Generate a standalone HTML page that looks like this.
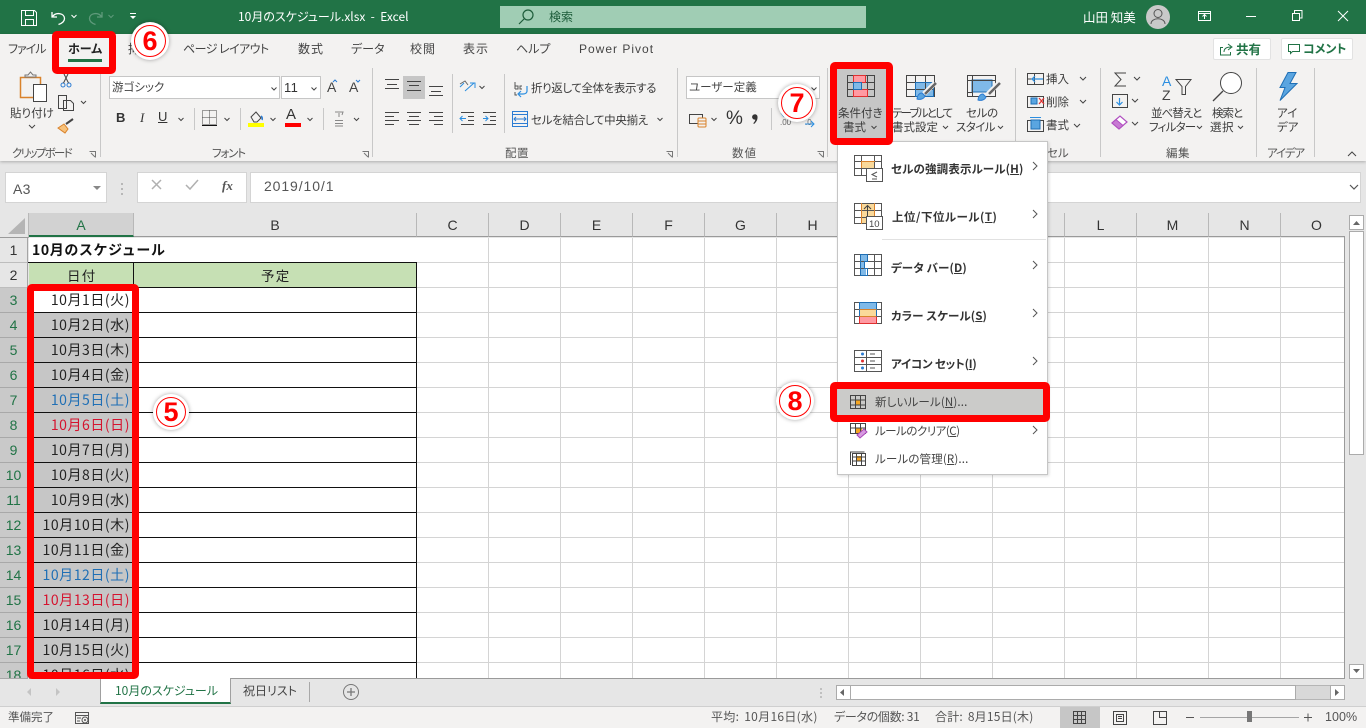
<!DOCTYPE html>
<html lang="ja"><head><meta charset="utf-8"><title>10月のスケジュール.xlsx - Excel</title>
<style>
html,body{margin:0;padding:0;width:1366px;height:728px;overflow:hidden;background:#e6e6e6}
body{position:relative;font-family:"Liberation Sans","Noto Sans CJK JP",sans-serif;font-size:12px;color:#444}
div,span.t{position:absolute;box-sizing:border-box}
.t{position:absolute;white-space:nowrap;line-height:16px;font-size:12px;color:#444;font-family:"Noto Sans CJK JP","Liberation Sans",sans-serif;font-feature-settings:"palt" 1}
.tab{top:41px;font-size:12px}
.lab{top:145px;font-size:11.5px;color:#555}
.rb{font-size:11.5px;color:#3c3c3c}
.sep{width:1px;background:#c8c8c8}
.col{top:213px;height:24px;background:#e6e6e6;border-right:1px solid #b8b8b8;border-bottom:1px solid #9a9a9a;text-align:center;font:14px/24px "Liberation Sans",sans-serif;color:#333}
.row{left:0;width:28px;height:25px;background:#e6e6e6;border-bottom:1px solid #bdbdbd;border-right:1px solid #a5a5a5;text-align:center;font:14px/24px "Liberation Sans",sans-serif;color:#333}
.row.s{background:#c9c9c9;color:#217346;border-bottom:1px solid #a8a8a8}
.d{left:29px;width:104px;height:24px;background:#c6c6c6;text-align:right;padding-right:3px;font:14px/24px "Noto Sans CJK JP",sans-serif;letter-spacing:.55px;color:#222;white-space:nowrap}
.sat{color:#1f6fb5}.sun{color:#d5142f}
.rf{border:7px solid #f00;border-radius:5px}
.num{border-radius:50%;background:#fff;box-shadow:0 0 4px rgba(0,0,0,.35);}
.num span{position:absolute;left:3px;top:3px;right:3px;bottom:3px;border:1.5px solid #f00;border-radius:50%;text-align:center;font:bold 27px/30px "Liberation Sans",sans-serif;color:#f00}
.m{font-size:11.5px;font-weight:700;color:#333;letter-spacing:.15px}
.m2{font-size:11.5px;color:#444;letter-spacing:.15px}
</style></head><body>

<!-- title bar -->
<div style="left:0;top:0;width:1366px;height:34px;background:#217346"></div>
<div style="left:500px;top:6px;width:366px;height:22px;background:#a0cdb4"></div>
<span class="t" style="left:238px;top:9px;color:#fff;font-size:12px;">10月のスケジュール.xlsx &nbsp;-&nbsp; Excel</span>
<span class="t" style="left:549px;top:9px;color:#1d5c3a">検索</span>
<span class="t" style="left:1083px;top:9px;color:#fff;font-size:12.5px">山田 知美</span>

<!-- ribbon -->
<div style="left:0;top:34px;width:1366px;height:127px;background:#f3f2f1;box-shadow:0 1px 3px rgba(0,0,0,.25)"></div>
<span class="t tab" style="left:8px;letter-spacing:-1px">ファイル</span>
<span class="t tab" style="left:68px;font-weight:700;color:#222;">ホーム</span>
<div style="left:68px;top:59px;width:34px;height:3px;background:#217346"></div>
<span class="t tab" style="left:128px">挿入</span>
<span class="t tab" style="left:183px;letter-spacing:-.55px">ページ レイアウト</span>
<span class="t tab" style="left:298px;letter-spacing:1px">数式</span>
<span class="t tab" style="left:351px">データ</span>
<span class="t tab" style="left:410px;letter-spacing:1px">校閲</span>
<span class="t tab" style="left:463px;letter-spacing:1px">表示</span>
<span class="t tab" style="left:516px">ヘルプ</span>
<span class="t tab" style="left:579px;font-family:'Liberation Sans',sans-serif;letter-spacing:1px">Power Pivot</span>

<div style="left:1213px;top:38px;width:58px;height:22px;background:#fff;border:1px solid #e2e2e2;border-radius:2px"></div>
<div style="left:1281px;top:38px;width:72px;height:22px;background:#fff;border:1px solid #e2e2e2;border-radius:2px"></div>
<span class="t" style="left:1236px;top:41px;color:#217346;font-weight:700;font-size:12.5px">共有</span>
<span class="t" style="left:1303px;top:41px;color:#217346;font-weight:700;font-size:12px">コメント</span>

<!-- separators -->
<div class="sep" style="left:100px;top:68px;height:89px"></div>
<div class="sep" style="left:372px;top:68px;height:89px"></div>
<div class="sep" style="left:677px;top:68px;height:89px"></div>
<div class="sep" style="left:827px;top:68px;height:89px"></div>
<div class="sep" style="left:1015px;top:68px;height:89px"></div>
<div class="sep" style="left:1100px;top:68px;height:89px"></div>
<div class="sep" style="left:1256px;top:68px;height:89px"></div>
<div class="sep" style="left:1314px;top:68px;height:89px"></div>
<div class="sep" style="left:194px;top:108px;height:22px"></div>
<div class="sep" style="left:240px;top:108px;height:22px"></div>
<div class="sep" style="left:323px;top:108px;height:22px"></div>
<div class="sep" style="left:504px;top:74px;height:59px"></div>
<div class="sep" style="left:771px;top:108px;height:22px"></div>
<div class="sep" style="left:452px;top:74px;height:59px"></div>

<!-- group labels -->
<span class="t lab" style="left:12px;letter-spacing:-1.7px">クリップボード</span>
<span class="t lab" style="left:212px;letter-spacing:-1.2px">フォント</span>
<span class="t lab" style="left:505px;letter-spacing:.5px">配置</span>
<span class="t lab" style="left:732px;letter-spacing:1px">数値</span>
<span class="t lab" style="left:1047px">セル</span>
<span class="t lab" style="left:1166px;letter-spacing:.5px">編集</span>
<span class="t lab" style="left:1267px;letter-spacing:-1.2px">アイデア</span>

<!-- clipboard text -->
<span class="t rb" style="left:10px;top:105px">貼り付け</span>

<!-- font boxes -->
<div style="left:109px;top:76px;width:171px;height:23px;background:#fff;border:1px solid #c6c6c6"></div>
<div style="left:281px;top:76px;width:40px;height:23px;background:#fff;border:1px solid #c6c6c6"></div>
<span class="t" style="left:112px;top:79px;font-size:11.5px">游ゴシック</span>
<span class="t" style="left:284px;top:80px;font:13px/16px 'Liberation Sans',sans-serif;color:#333;letter-spacing:.3px">11</span>
<span class="t" style="left:327px;top:79px;font:14px/16px 'Liberation Sans',sans-serif">A</span>
<span class="t" style="left:349px;top:79px;font:14px/16px 'Liberation Sans',sans-serif">A</span>
<span class="t" style="left:116px;top:110px;font:bold 13px/16px 'Liberation Sans',sans-serif;color:#333">B</span>
<span class="t" style="left:140px;top:110px;font:italic 13px/16px 'Liberation Serif',serif;color:#333">I</span>
<span class="t" style="left:158px;top:109px;font:13px/16px 'Liberation Sans',sans-serif;color:#333;text-decoration:underline">U</span>
<span class="t" style="left:286px;top:107px;font:15px/16px 'Liberation Sans',sans-serif;color:#333">A</span>

<!-- align -->
<div style="left:403px;top:76px;width:22px;height:23px;background:#c6c6c6"></div>
<span class="t rb" style="left:531px;top:80px;letter-spacing:-.4px">折り返して全体を表示する</span>
<span class="t rb" style="left:531px;top:112px;letter-spacing:-.3px">セルを結合して中央揃え</span>

<!-- number -->
<div style="left:686px;top:76px;width:134px;height:23px;background:#fff;border:1px solid #c6c6c6"></div>
<span class="t" style="left:689px;top:79px;font-size:11.5px">ユーザー定義</span>
<span class="t" style="left:726px;top:109px;font:19px/20px 'Liberation Sans',sans-serif;color:#333">%</span>
<span class="t" style="left:780px;top:118px;font:8px/9px 'Liberation Sans',sans-serif;color:#666">.00</span>
<span class="t" style="left:805px;top:118px;font:8px/9px 'Liberation Sans',sans-serif;color:#666">.0</span>

<!-- conditional -->
<div style="left:837px;top:69px;width:49px;height:70px;background:#c6c6c6"></div>
<span class="t rb" style="left:838px;top:105px">条件付き</span>
<span class="t rb" style="left:843px;top:119px">書式</span>
<span class="t rb" style="left:892px;top:105px;letter-spacing:-1.8px">テーブルとして</span>
<span class="t rb" style="left:892px;top:119px">書式設定</span>
<span class="t rb" style="left:966px;top:105px;letter-spacing:-.3px">セルの</span>
<span class="t rb" style="left:956px;top:119px;letter-spacing:-.6px">スタイル</span>
<span class="t rb" style="left:1046px;top:71px">挿入</span>
<span class="t rb" style="left:1046px;top:94px">削除</span>
<span class="t rb" style="left:1046px;top:117px">書式</span>
<span class="t rb" style="left:1151px;top:105px;letter-spacing:-1px">並べ替えと</span>
<span class="t rb" style="left:1149px;top:119px;letter-spacing:-.8px">フィルター</span>
<span class="t rb" style="left:1212px;top:105px;letter-spacing:-1px">検索と</span>
<span class="t rb" style="left:1210px;top:119px;letter-spacing:.5px">選択</span>
<span class="t rb" style="left:1277px;top:105px">アイ</span>
<span class="t rb" style="left:1277px;top:119px">デア</span>

<!-- formula bar -->
<div style="left:5px;top:172px;width:102px;height:31px;background:#fff;border:1px solid #d4d4d4"></div>
<div style="left:137px;top:172px;width:110px;height:31px;background:#fff;border:1px solid #d4d4d4"></div>
<div style="left:250px;top:172px;width:1111px;height:31px;background:#fff;border:1px solid #d4d4d4"></div>
<span class="t" style="left:13px;top:181px;font:14px/16px 'Liberation Sans',sans-serif;color:#555;letter-spacing:.3px">A3</span>
<span class="t" style="left:264px;top:178px;font:14px/16px 'Liberation Sans',sans-serif;color:#555;letter-spacing:.9px">2019/10/1</span>
<span class="t" style="left:222px;top:178px;font:italic bold 13px/16px 'Liberation Serif',serif;color:#555">fx</span>

<!-- grid -->
<div style="left:29px;top:238px;width:1316px;height:441px;background-color:#fff"></div>
<div style="left:417px;top:238px;width:928px;height:440px;background-image:repeating-linear-gradient(to right,transparent 0 71px,#d4d4d4 71px 72px)"></div>
<div style="left:29px;top:238px;width:1316px;height:440px;background-image:repeating-linear-gradient(to bottom,transparent 0 24px,#d4d4d4 24px 25px)"></div>
<div style="left:1344px;top:237px;width:1px;height:442px;background:#9a9a9a"></div>
<div style="left:29px;top:678px;width:1316px;height:1px;background:#9a9a9a"></div>
<div style="left:29px;top:263px;width:388px;height:24px;background:#c6e0b4"></div>
<div style="left:28px;top:262px;width:389px;height:416px;background-image:repeating-linear-gradient(to bottom,#111 0 1px,transparent 1px 25px)"></div>
<div style="left:133px;top:262px;width:1px;height:26px;background:#111"></div>
<div style="left:416px;top:262px;width:1px;height:416px;background:#111"></div>

<!-- column headers -->
<div style="left:0;top:213px;width:29px;height:25px;background:#e6e6e6;border-right:1px solid #b8b8b8;border-bottom:1px solid #9a9a9a"></div>
<div class="col" style="left:29px;width:105px;background:#d2d2d2;color:#217346;border-bottom:2px solid #217346">A</div>
<div class="col" style="left:134px;width:283px">B</div>
<div class="col" style="left:417px;width:72px">C</div>
<div class="col" style="left:489px;width:72px">D</div>
<div class="col" style="left:561px;width:72px">E</div>
<div class="col" style="left:633px;width:72px">F</div>
<div class="col" style="left:705px;width:72px">G</div>
<div class="col" style="left:777px;width:72px">H</div>
<div class="col" style="left:849px;width:72px">I</div>
<div class="col" style="left:921px;width:72px">J</div>
<div class="col" style="left:993px;width:72px">K</div>
<div class="col" style="left:1065px;width:72px">L</div>
<div class="col" style="left:1137px;width:72px">M</div>
<div class="col" style="left:1209px;width:72px">N</div>
<div class="col" style="left:1281px;width:72px">O</div>

<!-- row headers -->
<div class="row" style="top:238px">1</div>
<div class="row" style="top:263px">2</div>
<div class="row s" style="top:288px">3</div>
<div class="row s" style="top:313px">4</div>
<div class="row s" style="top:338px">5</div>
<div class="row s" style="top:363px">6</div>
<div class="row s" style="top:388px">7</div>
<div class="row s" style="top:413px">8</div>
<div class="row s" style="top:438px">9</div>
<div class="row s" style="top:463px">10</div>
<div class="row s" style="top:488px">11</div>
<div class="row s" style="top:513px">12</div>
<div class="row s" style="top:538px">13</div>
<div class="row s" style="top:563px">14</div>
<div class="row s" style="top:588px">15</div>
<div class="row s" style="top:613px">16</div>
<div class="row s" style="top:638px">17</div>
<div class="row s" style="top:663px;height:16px;overflow:hidden">18</div>

<!-- cells -->
<span class="t" style="left:32px;top:241px;font-size:14px;font-weight:700;color:#111;letter-spacing:.6px;line-height:18px;font-feature-settings:normal">10月のスケジュール</span>
<span class="t" style="left:67px;top:266px;font-size:13.5px;color:#222;letter-spacing:1.2px;line-height:18px">日付</span>
<span class="t" style="left:261px;top:266px;font-size:13.5px;color:#222;letter-spacing:1.2px;line-height:18px">予定</span>
<div class="d" style="top:288px;background:#fff">10月1日(火)</div>
<div class="d" style="top:313px">10月2日(水)</div>
<div class="d" style="top:338px">10月3日(木)</div>
<div class="d" style="top:363px">10月4日(金)</div>
<div class="d sat" style="top:388px">10月5日(土)</div>
<div class="d sun" style="top:413px">10月6日(日)</div>
<div class="d" style="top:438px">10月7日(月)</div>
<div class="d" style="top:463px">10月8日(火)</div>
<div class="d" style="top:488px">10月9日(水)</div>
<div class="d" style="top:513px">10月10日(木)</div>
<div class="d" style="top:538px">10月11日(金)</div>
<div class="d sat" style="top:563px">10月12日(土)</div>
<div class="d sun" style="top:588px">10月13日(日)</div>
<div class="d" style="top:613px">10月14日(月)</div>
<div class="d" style="top:638px">10月15日(火)</div>
<div class="d" style="top:663px;height:15px;overflow:hidden">10月16日(水)</div>

<!-- scrollbars -->
<div style="left:1345px;top:213px;width:21px;height:466px;background:#e6e6e6"></div>
<div style="left:1349px;top:215px;width:15px;height:15px;background:#fff;border:1px solid #ababab"></div>
<div style="left:1349px;top:231px;width:15px;height:224px;background:#fff;border:1px solid #ababab"></div>
<div style="left:1349px;top:664px;width:15px;height:15px;background:#fff;border:1px solid #ababab"></div>

<!-- tab bar -->
<div style="left:0;top:679px;width:1366px;height:27px;background:#e6e6e6"></div>
<div style="left:100px;top:678px;width:131px;height:26px;background:#fff;border-left:1px solid #a0a0a0;border-right:1px solid #a0a0a0;border-bottom:2px solid #217346"></div>
<span class="t" style="left:115px;top:683px;color:#217346;font-size:12px;">10月のスケジュール</span>
<span class="t" style="left:243px;top:683px;font-size:12px;color:#444;">祝日リスト</span>
<div style="left:309px;top:682px;width:1px;height:20px;background:#a8a8a8"></div>
<div style="left:836px;top:685px;width:509px;height:15px;background:#d8d8d8;border:1px solid #b5b5b5;border-left:none;border-right:none"></div>
<div style="left:836px;top:685px;width:15px;height:15px;background:#fff;border:1px solid #ababab"></div>
<div style="left:851px;top:685px;width:445px;height:15px;background:#fff;border:1px solid #ababab;border-left:none"></div>
<div style="left:1330px;top:685px;width:15px;height:15px;background:#fff;border:1px solid #ababab"></div>

<!-- status bar -->
<div style="left:0;top:706px;width:1366px;height:22px;background:#f3f2f1;border-top:1px solid #cfcfcf"></div>
<div style="left:1060px;top:707px;width:40px;height:21px;background:#c6c6c6"></div>
<span class="t" style="left:8px;top:709px;font-size:11.5px;color:#555">準備完了</span>
<span class="t" style="left:711px;top:709px;font-size:12px;letter-spacing:.3px;word-spacing:2px;color:#555">平均: 10月16日(水)</span>
<span class="t" style="left:834px;top:709px;font-size:12px;letter-spacing:-.3px;color:#555">データの個数: 31</span>
<span class="t" style="left:935px;top:709px;font-size:12px;letter-spacing:.2px;word-spacing:2px;color:#555">合計: 8月15日(木)</span>
<span class="t" style="left:1325px;top:709px;font:12.5px/16px 'Liberation Sans',sans-serif;color:#555;letter-spacing:.05px">100%</span>
<div style="left:1200px;top:717px;width:99px;height:1px;background:#a5a5a5"></div>
<div style="left:1247px;top:711px;width:5px;height:11px;background:#777"></div>

<!-- dropdown menu -->
<div style="left:837px;top:141px;width:211px;height:334px;background:#fff;border:1px solid #c6c6c6;box-shadow:1px 1px 3px rgba(0,0,0,.15)"></div>
<div style="left:882px;top:239px;width:164px;height:1px;background:#e1e1e1"></div>
<div style="left:838px;top:388px;width:205px;height:28px;background:#cbcbc9"></div>
<span class="t m" style="left:891px;top:161px">セルの強調表示ルール(<u>H</u>)</span>
<span class="t m" style="left:892px;top:209px;letter-spacing:.5px">上位/下位ルール(<u>T</u>)</span>
<span class="t m" style="left:891px;top:260px">データ バー(<u>D</u>)</span>
<span class="t m" style="left:891px;top:308px;letter-spacing:.1px">カラー スケール(<u>S</u>)</span>
<span class="t m" style="left:891px;top:356px;letter-spacing:-.2px">アイコン セット(<u>I</u>)</span>
<span class="t m2" style="left:875px;top:394px">新しいルール(<u>N</u>)...</span>
<span class="t m2" style="left:875px;top:423px;letter-spacing:-.5px">ルールのクリア(<u>C</u>)</span>
<span class="t m2" style="left:875px;top:451px">ルールの管理(<u>R</u>)...</span>

<!-- icons -->
<svg width="1366" height="728" style="position:absolute;left:0;top:0" fill="none" stroke-width="1">
<!-- save -->
<g stroke="#fff"><path d="M21.5 10.5h13l2 2v13h-15z"/><path d="M25.500 10.500v5h8v-5M25.500 25.500v-6h8v6"/></g>
<!-- undo / redo -->
<path d="M52 12v5h5M52.500 16.500c4-5 12-3 12 2 0 3-3 5-6 6" stroke="#fff" stroke-width="1.300"/>
<path d="M71.500 15l2.500 2.500 2.500-2.500" stroke="#fff"/>
<path d="M102 12v5h-5M101.500 16.500c-4-5-12-3-12 2 0 3 3 5 6 6" stroke="#5f9a7b" stroke-width="1.300"/>
<path d="M108.500 15l2.500 2.500 2.500-2.500" stroke="#5f9a7b"/>
<path d="M130 13.500h6" stroke="#fff"/><path d="M130 16l3 3 3-3z" fill="#fff"/>
<!-- search -->
<circle cx="528" cy="15" r="5" stroke="#1d5c3a" stroke-width="1.200"/><path d="M524 19l-5 5" stroke="#1d5c3a" stroke-width="1.200"/>
<!-- avatar -->
<circle cx="1158" cy="17" r="12" fill="#c9c9c9"/><circle cx="1158" cy="13.500" r="4" stroke="#555"/><path d="M1151 24c0-7 14-7 14 0" stroke="#555"/>
<!-- window ctrls -->
<g stroke="#fff"><path d="M1198.500 11.500h12v9h-12zM1198.500 13.500h12M1204.500 19v-4M1202.500 16.500l2-2 2 2"/><path d="M1246 16.500h10"/><path d="M1292.500 13.500h7v7h-7zM1294.500 13v-2.500h7.500v7.500h-2.500"/><path d="M1338 11l10 10M1348 11l-10 10"/></g>
<!-- share / comment -->
<g stroke="#217346"><path d="M1223 47.500h-2.500v7.500h10v-3M1224 52c0-4 3-5 7-5M1228 44l4 3-4 3"/><path d="M1288.500 44.500h11v7h-7l-2 2v-2h-2z"/></g>
<!-- clipboard -->
<path d="M20.500 77.500h20v20h-20z" stroke="#d9822b" stroke-width="1.500"/><path d="M25 77h11v-2h-3l-2.500-3-2.500 3h-3z" fill="#f3f2f1" stroke="#777"/>
<path d="M33.500 84.500h13v17h-13z" fill="#fff" stroke="#444"/>
<path d="M29 125l3 3 3-3" stroke="#444"/>
<g stroke="#2b7cd3"><circle cx="63" cy="85" r="2"/><circle cx="69" cy="85" r="2"/></g><path d="M63.500 83L68 74M68.500 83L64 74" stroke="#444"/>
<path d="M58.500 95.500h8v13h-8zM63.500 100.500h7l3 3v7h-10z" fill="#f3f2f1" stroke="#444"/>
<path d="M81 101l2.500 2.500 2.500-2.500" stroke="#444"/>
<path d="M58 128l6-4 4 5-3 4z" fill="#f7c27b" stroke="#d9822b"/><path d="M66 124l7-5" stroke="#444" stroke-width="2"/>
<!-- dialog launchers -->
<g stroke="#777"><path d="M89.500 151.500h6v6M91 153l4 4M362.500 151.500h6v6M364 153l4 4M666.500 151.500h6v6M668 153l4 4M817.500 151.500h6v6M819 153l4 4"/></g>
<!-- chevrons -->
<g stroke="#444"><path d="M271.500 87.500l2.500 2.500 2.500-2.500M311.500 87.500l2.500 2.500 2.500-2.500M178.500 118l2.500 2.500 2.500-2.500M224.500 118l2.500 2.500 2.500-2.500M270.500 118l2.500 2.500 2.500-2.500M307.500 118l2.500 2.500 2.500-2.500M354 118l2.500 2.500 2.500-2.500M479.500 86l2.500 2.500 2.500-2.500M657.500 118l2.500 2.500 2.500-2.500M811.500 87.500l2.500 2.500 2.500-2.500M711.500 118l2.500 2.500 2.500-2.500M871.500 126l2.500 2.500 2.500-2.500M943 126l2.500 2.500 2.500-2.500M998 126l2.500 2.500 2.500-2.500M1080 77l3 3 3-3M1080 100l3 3 3-3M1074 124l3 3 3-3M1134 77l3 3 3-3M1132 99l3 3 3-3M1132 122l3 3 3-3M1197 126l2.500 2.500 2.500-2.500M1238 126l2.500 2.500 2.500-2.500"/><path d="M1348 156l4-4 4 4"/></g>
<path d="M333 82l2-2 2 2M356 80l2 2 2-2" stroke="#2b7cd3"/>
<!-- border icon -->
<path d="M202.500 110.500h14v14h-14z M202.500 117.500h14 M209.500 110.500v14" stroke="#444" stroke-dasharray="1 1"/><path d="M202 125.500h15" stroke="#111"/>
<!-- fill / font colour -->
<path d="M251 117l5-5 5 6-4 4h-3z" stroke="#444"/><path d="M261 116c1.500 1 1.500 3 1 4" stroke="#2b7cd3" stroke-width="1.500"/><rect x="248" y="123" width="16" height="4" fill="#ff0"/>
<rect x="285" y="123" width="16" height="4" fill="#f00"/>
<!-- phonetic -->
<path d="M335 112h8l-1 3M339 113v4M335 120.500h8M335 123.500h8M335 126h8" stroke="#888"/>
<!-- align -->
<g stroke="#444"><path d="M385 79.500h14M387 84.500h10M385 88.500h14M407 81.500h14M409 85.500h10M407 90.500h14M429 86.500h14M431 91.500h10M429 95.500h14"/><path d="M385 112.500h14M385 116.500h9M385 120.500h14M385 124.500h9M407 112.500h14M409 116.500h10M407 120.500h14M409 124.500h10M429 112.500h14M434 116.500h9M429 120.500h14M434 124.500h9"/></g>
<path d="M460 87l4-4M465 91l9-8M470 83h5v5" stroke="#2b8ee0"/><path d="M460 84l5-3 3 4" stroke="#666"/>
<g stroke="#444"><path d="M461 112.500h13M468 116.500h6M468 120.500h6M461 124.500h13M483 112.500h13M490 116.500h6M490 120.500h6M483 124.500h13"/></g>
<path d="M466 118.500h-6M462.500 116l-2.500 2.500 2.500 2.500M483 118.500h5M485.500 116l2.500 2.500-2.500 2.500" stroke="#2b8ee0"/>
<!-- wrap / merge -->
<path d="M515 82v7M515 86h3v3h-3M522 86h-2v3h2M515 92v3h2" stroke="#555"/><path d="M527 86v5c0 2-2 3-4 3h-4M521 91l-3 3 3 3" stroke="#2b8ee0" stroke-width="1.200"/>
<path d="M512.500 111.500h15v15h-15zM512.500 114.500h15M512.500 123.500h15" stroke="#2b7cd3"/><path d="M514 119h12M516 117l-2 2 2 2M524 117l2 2-2 2" stroke="#2b7cd3"/>
<!-- accounting -->
<path d="M689.500 114.500h13v9h-13z" stroke="#444"/><rect x="698" y="118" width="8" height="9" rx="1" fill="#f3f2f1" stroke="#d9822b"/><path d="M698 121h8M698 124h8" stroke="#d9822b"/>
<!-- comma -->
<path d="M754 114.500a2.500 2.500 0 0 1 3.500 2c.3 3-1 5.500-3.500 7.500l-.7-.8c1.200-1.200 1.900-2.400 2-3.700a2.500 2.500 0 0 1-1.300-5z" fill="#333"/>
<!-- decimals arrows -->
<path d="M781 113l3 4M805 124h9M811 121l3 3-3 3" stroke="#2b8ee0"/>
<!-- cond fmt icon -->
<g>
<rect x="853" y="75" width="12" height="7" fill="#ff9aa2"/><rect x="853" y="90" width="14" height="7" fill="#ff9aa2"/><rect x="853" y="82" width="8" height="8" fill="#7fb9e8"/>
<path d="M847.500 75.500h27v21h-27zM847.500 82.500h27M847.500 89.500h27M853.500 75.500v21M867.500 75.500v21" stroke="#444"/>
<path d="M853.500 75.500h12v7h-12zM853.500 89.500h14v7h-14z" stroke="#e03030"/><path d="M853.500 82.500h8v7h-8z" stroke="#1f6fb5"/>
</g>
<!-- table fmt -->
<rect x="915" y="82" width="18" height="15" fill="#7fb9e8"/>
<path d="M906.500 75.500h28v21h-28zM906.500 82.500h28M906.500 89.500h28M915.500 75.500v21M925.500 75.500v21" stroke="#444"/>
<path d="M915.500 82.500h18v14h-18z" stroke="#1f6fb5"/>
<path d="M935 83l-11 11" stroke="#f3f2f1" stroke-width="5"/><path d="M936 83l-11 11" stroke="#666" stroke-width="2.500"/><path d="M917 99c0-3 2-6 5-6l3 3c-1 3-5 4-8 3z" fill="#5aa5e0" stroke="#2b7cd3"/>
<!-- cell style -->
<rect x="972" y="80" width="20" height="12" fill="#7fb9e8" stroke="#1f6fb5"/>
<path d="M967.500 75.500h28v21h-28z" stroke="#444"/><path d="M967.500 80.500h28M972.500 75.500v21M967.500 92.500h5" stroke="#444"/>
<path d="M999 83l-11 11" stroke="#f3f2f1" stroke-width="5"/><path d="M1000 83l-11 11" stroke="#666" stroke-width="2.500"/><path d="M978 100c0-3 2-6 5-6l3 3c-1 3-5 4-8 3z" fill="#5aa5e0" stroke="#2b7cd3"/>
<!-- cells icons -->
<path d="M1027.500 73.500h16v11h-16zM1034.500 73.500v11M1027.500 79h7" stroke="#444"/><path d="M1043 79h-11M1035 76l-3 3 3 3" stroke="#2b8ee0" stroke-width="1.200"/>
<path d="M1027.500 96.500h16v11h-16z" stroke="#444"/><rect x="1031" y="98" width="6" height="6" fill="#5aa5e0" stroke="#1f6fb5"/><path d="M1039 98l5 6M1044 98l-5 6" stroke="#e03030" stroke-width="1.200"/>
<path d="M1027.500 120.500h16v11h-16z" stroke="#444"/><rect x="1031" y="120" width="9" height="9" fill="#5aa5e0" stroke="#1f6fb5"/><path d="M1030 117.500h11" stroke="#2b8ee0"/>
<!-- edit icons -->
<path d="M1126 73h-11l6 6.500-6 6.500h11" stroke="#444"/>
<path d="M1112.500 94.500h15v13h-15z" stroke="#444"/><path d="M1119.500 98v7M1116.500 102l3 3 3-3" stroke="#2b8ee0" stroke-width="1.200"/>
<path d="M1112 123l8-7 7 6-8 7z" fill="#fff" stroke="#b04fc0" stroke-width="1.200"/><path d="M1112 123l4-3.500 7 6-4 3.500z" fill="#c77ad3" stroke="#b04fc0"/>
<!-- sort -->
<text x="1162" y="86" font-family="Liberation Sans,sans-serif" font-size="14" fill="#2b8ee0">A</text>
<text x="1162" y="100" font-family="Liberation Sans,sans-serif" font-size="14" fill="#444">Z</text>
<path d="M1176 79.500h15l-5.500 7v8h-3.500v-8z" stroke="#444"/>
<!-- find -->
<circle cx="1231" cy="83" r="10.500" fill="#fff" stroke="#444"/><path d="M1223 91l-10 10" stroke="#444" stroke-width="1.300"/>
<!-- idea -->
<path d="M1288 72.500h8l-6 11h7l-17 17 5-13h-5z" fill="#5aa5e0" stroke="#1f6fb5"/>
<!-- formula bar -->
<path d="M93 186h8l-4 4z" fill="#888"/><path d="M122 183v2M122 188v2M122 193v2" stroke="#888"/>
<path d="M152 180l9 9M161 180l-9 9" stroke="#b0b0b0" stroke-width="1.500"/><path d="M186 185l4 4 8-9" stroke="#b0b0b0" stroke-width="1.500"/>
<path d="M1350 185l4 4 4-4" stroke="#555" stroke-width="1.200"/>
<!-- corner -->
<path d="M25 218v16H8z" fill="#b5b5b5"/>
<!-- scroll arrows -->
<path d="M1353 225l3.500-4 3.500 4z" fill="#666"/><path d="M1353 669l3.500 4 3.500-4z" fill="#666"/>
<path d="M844 689l-4 3.500 4 3.500z" fill="#666"/><path d="M1335 689l4 3.500-4 3.500z" fill="#666"/>
<path d="M31 688l-4 4 4 4z" fill="#c4c4c4"/><path d="M56 688l4 4-4 4z" fill="#c4c4c4"/>
<circle cx="351" cy="692" r="7.500" stroke="#777"/><path d="M347 692h8M351 688v8" stroke="#777" stroke-width="1.300"/>
<path d="M821 688v2M821 692v2M821 696v2" stroke="#999"/>
<!-- status icons -->
<path d="M75.500 712.500h13v11h-13zM75.500 715.500h13M77 718h4M77 721h3" stroke="#555"/><circle cx="85" cy="720" r="3" fill="#f3f2f1" stroke="#555"/><circle cx="85" cy="720" r="1" fill="#555"/>
<path d="M1073.500 711.500h12v12h-12zM1077.500 711.500v12M1081.500 711.500v12M1073.500 715.500h12M1073.500 719.500h12" stroke="#444"/>
<path d="M1113.500 711.500h13v13h-13z M1116.500 714.500h7v7h-7zM1118 716.500h4M1118 718.500h4" stroke="#444"/>
<path d="M1153.500 711.500h13v13h-13zM1159.500 711.500v6h7" stroke="#444"/>
<path d="M1186 717.500h8M1304 717.500h8M1308 713.500v8" stroke="#555"/>
<!-- menu icons -->
<g>
<rect x="861" y="161" width="14" height="7" fill="#fad99a"/>
<path d="M854.500 155.500h27v20h-27zM854.500 161.500h27M854.500 168.500h27M861.500 155.500v20M874.500 155.500v20" stroke="#555"/><path d="M861 161.500h14" stroke="#d9822b"/><path d="M861.500 161v7" stroke="#d9822b"/>
<rect x="866.500" y="168.500" width="16" height="13" fill="#fff" stroke="#555"/><path d="M877 172l-5 2.500 5 2.500M872 179h5" stroke="#555"/>
</g>
<g>
<rect x="861" y="203" width="13" height="21" fill="#fad99a"/>
<path d="M854.500 203.500h27v20h-27zM854.500 210.500h27M854.500 217.500h27" stroke="#555"/><path d="M861.500 203v21M874.500 203v21" stroke="#d9822b"/><path d="M867.500 216v-10M864 209l3.500-3.500 3.500 3.500" stroke="#444"/>
<rect x="866.500" y="216.500" width="16" height="13" fill="#fff" stroke="#555"/>
<text x="869" y="227" font-family="Liberation Sans,sans-serif" font-size="9.500" fill="#444">10</text>
</g>
<g>
<rect x="860" y="255" width="7" height="7" fill="#7fb9e8"/><rect x="860" y="262" width="4" height="7" fill="#7fb9e8"/><rect x="860" y="269" width="6" height="7" fill="#7fb9e8"/>
<path d="M854.500 254.500h27v21h-27zM854.500 261.500h27M854.500 268.500h27M860.500 254.500v21M874.500 254.500v21" stroke="#555"/><path d="M860.500 254.500h7v7h-3v7h3v7h-7z" stroke="#1f6fb5"/>
</g>
<g>
<rect x="859" y="303" width="17" height="7" fill="#7fb9e8"/><rect x="859" y="310" width="17" height="7" fill="#fad99a"/><rect x="859" y="317" width="17" height="7" fill="#ff9aa2"/>
<path d="M854.500 302.500h27v21h-27zM854.500 309.500h27M854.500 316.500h27" stroke="#555"/>
<path d="M859.500 302.500h17v7h-17zM859.500 309.500v7M876.500 309.500v7" stroke="#1f6fb5"/><path d="M859.500 309.500h17M859.500 316.500h17" stroke="#d9822b"/><path d="M859.500 316.500v7h17v-7" stroke="#e03030"/>
</g>
<g>
<path d="M854.500 350.500h27v21h-27zM854.500 357.500h27M854.500 364.500h27M866.500 350.500v21" stroke="#555"/>
<circle cx="862.500" cy="354" r="1.500" fill="#2b7cd3"/><circle cx="862.500" cy="361" r="1.500" fill="#e03030"/><circle cx="862.500" cy="368" r="1.500" fill="#2b7cd3"/>
<path d="M870 354h5M870 361h5M870 368h5" stroke="#555"/>
</g>
<g>
<rect x="855" y="400" width="6" height="5" fill="#f5a623"/>
<path d="M850.500 395.500h15v13h-15zM850.500 400h15M850.500 405h15M855.500 395.500v13M860.500 395.500v13" stroke="#444"/>
</g>
<g>
<rect x="855" y="428" width="7" height="5" fill="#f5a623"/>
<path d="M850.500 423.500h15v10h-15zM850.500 428h15M855.500 423.500v10M860.500 423.500v10" stroke="#444"/>
<path d="M857 435l7-6 3 3-7 6z" fill="#d79ae0" stroke="#a845b8"/>
</g>
<g>
<rect x="856" y="456" width="6" height="5" fill="#f5a623"/>
<path d="M852.500 453.500h13v12h-13zM852.500 457h13M852.500 461h13M856.500 453.500v12M861.500 453.500v12" stroke="#444"/><path d="M850.500 465v-13h14" stroke="#444"/>
</g>
<path d="M1033 162l4 4-4 4M1033 210l4 4-4 4M1033 261l4 4-4 4M1033 309l4 4-4 4M1033 357l4 4-4 4M1033 426l4 4-4 4" stroke="#555"/>
</svg>

<!-- red frames -->
<div class="rf" style="left:52px;top:31px;width:64px;height:43px"></div>
<div class="rf" style="left:830px;top:62px;width:63px;height:83px"></div>
<div class="rf" style="left:27px;top:284px;width:112px;height:395px"></div>
<div class="rf" style="left:830px;top:382px;width:220px;height:40px"></div>

<!-- number badges -->
<div class="num" style="left:131px;top:22px;width:38px;height:38px"><span>6</span></div>
<div class="num" style="left:778px;top:84px;width:38px;height:38px"><span>7</span></div>
<div class="num" style="left:153px;top:394px;width:36px;height:36px"><span style="line-height:28px">5</span></div>
<div class="num" style="left:776px;top:382px;width:38px;height:38px"><span>8</span></div>
</body></html>
